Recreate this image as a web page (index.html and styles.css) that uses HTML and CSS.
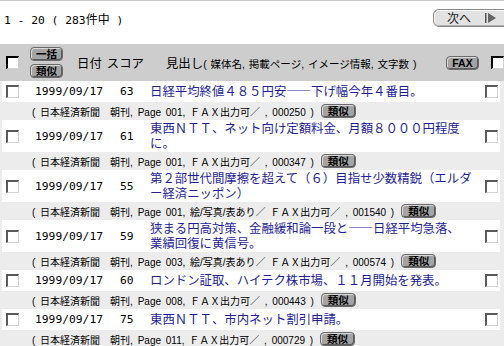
FILE: index.html
```html
<!DOCTYPE html>
<html lang="ja">
<head>
<meta charset="utf-8">
<title>検索結果</title>
<link rel="stylesheet" href="styles.css">
</head>
<body>
<div class="pager">
  <span class="range"><span class="mono">1 - 20 ( 283</span>件中<span class="mono"> )</span></span>
  <button class="next">次へ <svg class="next-ico" width="12" height="10" viewBox="0 0 12 10"><rect x="0" y="0" width="1.5" height="10" fill="#555"/><polygon points="3,0 11,5 3,10" fill="#666"/></svg></button>
</div>
<div class="head">
  <span class="cb cb-head"></span>
  <div class="head-btns">
    <button class="gbtn">一括</button>
    <button class="gbtn">類似</button>
  </div>
  <span class="h-date">日付</span>
  <span class="h-score">スコア</span>
  <span class="h-title">見出し<small>( 媒体名, 掲載ページ, イメージ情報, 文字数 )</small></span>
  <button class="gbtn fax">FAX</button>
  <span class="cb cb-head cb-right"></span>
</div>
<div class="results">
  <div class="item">
    <div class="c-chk"><span class="cb"></span></div>
    <div class="c-date">1999/09/17</div>
    <div class="c-score">63</div>
    <div class="c-title">日経平均終値４８５円安――下げ幅今年４番目。</div>
    <div class="c-chk2"><span class="cb"></span></div>
  </div>
  <div class="meta"><span>( 日本経済新聞　朝刊, Page 001, ＦＡＸ出力可／ , 000250 )</span><button class="gbtn">類似</button></div>

  <div class="item">
    <div class="c-chk"><span class="cb"></span></div>
    <div class="c-date">1999/09/17</div>
    <div class="c-score">61</div>
    <div class="c-title">東西ＮＴＴ、ネット向け定額料金、月額８０００円程度に。</div>
    <div class="c-chk2"><span class="cb"></span></div>
  </div>
  <div class="meta"><span>( 日本経済新聞　朝刊, Page 001, ＦＡＸ出力可／ , 000347 )</span><button class="gbtn">類似</button></div>

  <div class="item">
    <div class="c-chk"><span class="cb"></span></div>
    <div class="c-date">1999/09/17</div>
    <div class="c-score">55</div>
    <div class="c-title">第２部世代間摩擦を超えて（６）目指せ少数精鋭（エルダー経済ニッポン）</div>
    <div class="c-chk2"><span class="cb"></span></div>
  </div>
  <div class="meta"><span>( 日本経済新聞　朝刊, Page 001, 絵/写真/表あり／ ＦＡＸ出力可／ , 001540 )</span><button class="gbtn">類似</button></div>

  <div class="item">
    <div class="c-chk"><span class="cb"></span></div>
    <div class="c-date">1999/09/17</div>
    <div class="c-score">59</div>
    <div class="c-title">狭まる円高対策、金融緩和論一段と――日経平均急落、<br>業績回復に黄信号。</div>
    <div class="c-chk2"><span class="cb"></span></div>
  </div>
  <div class="meta"><span>( 日本経済新聞　朝刊, Page 003, 絵/写真/表あり／ ＦＡＸ出力可／ , 000574 )</span><button class="gbtn">類似</button></div>

  <div class="item">
    <div class="c-chk"><span class="cb"></span></div>
    <div class="c-date">1999/09/17</div>
    <div class="c-score">60</div>
    <div class="c-title">ロンドン証取、ハイテク株市場、１１月開始を発表。</div>
    <div class="c-chk2"><span class="cb"></span></div>
  </div>
  <div class="meta"><span>( 日本経済新聞　朝刊, Page 008, ＦＡＸ出力可／ , 000443 )</span><button class="gbtn">類似</button></div>

  <div class="item">
    <div class="c-chk"><span class="cb"></span></div>
    <div class="c-date">1999/09/17</div>
    <div class="c-score">75</div>
    <div class="c-title">東西ＮＴＴ、市内ネット割引申請。</div>
    <div class="c-chk2"><span class="cb"></span></div>
  </div>
  <div class="meta"><span>( 日本経済新聞　朝刊, Page 011, ＦＡＸ出力可／ , 000729 )</span><button class="gbtn">類似</button></div>
</div>
</body>
</html>
```
FILE: styles.css
```css
* { box-sizing: border-box; }
html, body { overflow: hidden; }
body {
  margin: 0;
  background: #fff;
  color: #000;
  font-family: "Noto Sans CJK JP", sans-serif;
  font-size: 12px;
}
.mono { font-family: "DejaVu Sans Mono", "Noto Sans CJK JP", monospace; font-size: 11.3px; }
button { font-family: "Noto Sans CJK JP", sans-serif; padding: 0; cursor: pointer; }

.pager {
  display: flex;
  justify-content: space-between;
  align-items: flex-start;
  height: 44px;
  border-top: 1px solid #c8c8c8;
  padding: 8px 0 0 4px;
}
.range { line-height: 16px; margin-top: 2px; white-space: pre; font-size: 12px; }
.next {
  width: 80px;
  height: 18px;
  margin-right: -9px;
  background: #e2e2e2;
  border: 1px solid #8a8a8a;
  border-radius: 6px;
  box-shadow: inset 1px 1px 0 #fafafa, inset -1px -1px 0 #b0b0b0;
  font-size: 12px;
  color: #222;
  display: flex;
  align-items: center;
  padding-left: 13px;
  line-height: 1;
}
.next-ico { margin-left: 14px; }

.head {
  display: flex;
  align-items: center;
  height: 37px;
  background: #cdcdcd;
  padding-left: 6px;
  font-size: 12.4px;
}
.head-btns { display: flex; flex-direction: column; gap: 3px; margin-left: 11px; }
.h-date { margin-left: 14px; }
.h-score { margin-left: 5px; }
.h-title { margin-left: 22px; width: 280px; white-space: nowrap; }
.h-title small { font-size: 10.5px; font-family: "Liberation Sans", "Noto Sans CJK JP", sans-serif; word-spacing: 1px; }
.fax { width: 35px; margin-right: 12px; font-family: "Liberation Sans", sans-serif; }
.cb-right { margin-right: -10px; }

.gbtn {
  width: 33px;
  height: 14px;
  background: #a4a4a4;
  border: 1px solid #6a6a6a;
  border-radius: 4px;
  box-shadow: inset 1px 1px 0 #d8d8d8, inset -1px -1px 0 #5a5a5a;
  font-size: 10.5px;
  font-weight: bold;
  line-height: 12px;
  color: #000;
}

.cb {
  display: block;
  width: 13px;
  height: 13px;
  background: #fff;
  border-top: 2px solid #5a5a5a;
  border-left: 2px solid #5a5a5a;
  border-right: 1px solid #d4d4d4;
  border-bottom: 1px solid #d4d4d4;
}
.cb-head { border-top-color: #000; border-left-color: #000; }

.results {
  background: #ececec;
  padding: 0 4px 0 2px;
}
.item {
  display: grid;
  grid-template-columns: 28px 84px 36px 330px 1fr;
  align-items: center;
  background: #fff;
  min-height: 21px;
  padding: 1px 0;
}
.c-chk { padding-left: 4px; }
.c-date { padding-left: 5px; font-family: "DejaVu Sans Mono", monospace; font-size: 11.3px; }
.c-score { padding-left: 6px; font-family: "DejaVu Sans Mono", monospace; font-size: 11.3px; }
.c-title { color: #1e1e9e; font-size: 12.4px; line-height: 15px; }
.c-chk2 { padding-left: 5px; }

.meta {
  display: flex;
  align-items: center;
  gap: 7px;
  height: 18px;
  padding-left: 30px;
  font-family: "Liberation Sans", "Noto Sans CJK JP", sans-serif;
  font-size: 10px;
  white-space: pre;
  word-spacing: 2px;
}
.meta .gbtn { width: 35px; word-spacing: 0; }
```
